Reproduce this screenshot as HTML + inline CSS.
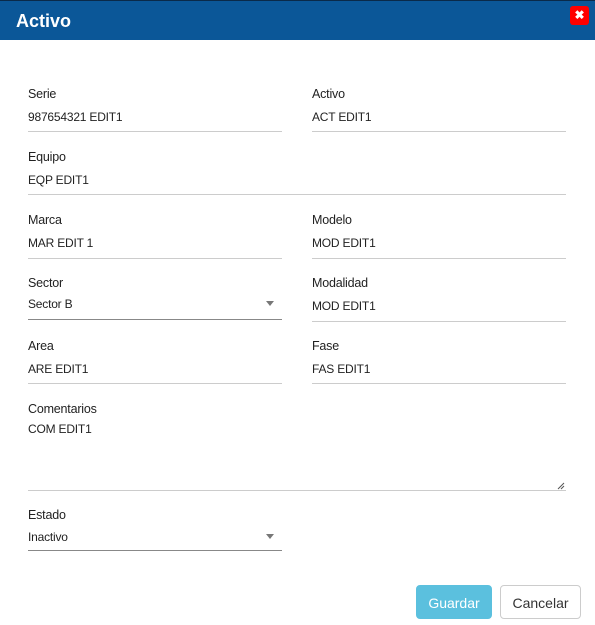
<html><head><style>
body{margin:0;width:595px;height:625px;background:#fff;font-family:"Liberation Sans",sans-serif;position:relative;overflow:hidden;color:#222}
.hd{position:absolute;left:0;top:0;width:595px;height:40px;background:#0b5798;border-top:1px solid #0a2a4a;box-sizing:border-box}
.hd span{position:absolute;left:16px;top:10px;color:#fff;font-weight:bold;font-size:18px}
.x{position:absolute;left:570px;top:6px;width:19px;height:19px;background:#f00;border-radius:3px;color:#fff;font-size:12px;font-weight:bold;text-align:center;line-height:19px}
.l,.v{position:absolute;font-size:12.5px;white-space:nowrap;letter-spacing:-0.2px}
.l{color:#222}.v{color:#222;font-size:12px}
.ln{position:absolute;height:1px;background:#ccc}
.sel{height:1px;background:#888}
.ar{position:absolute;width:0;height:0;border-left:4px solid transparent;border-right:4px solid transparent;border-top:5px solid #777}
.b{position:absolute;top:585px;height:34px;border-radius:4px;font-size:14px;text-align:center;line-height:34px;box-sizing:border-box}
</style></head><body>
<div class="hd"><span>Activo</span></div><div class="x">✖</div>

<div class="l" style="left:28px;top:87px">Serie</div><div class="v" style="left:28px;top:110px">987654321 EDIT1</div><div class="ln" style="left:28px;top:131px;width:254px"></div>
<div class="l" style="left:312px;top:87px">Activo</div><div class="v" style="left:312px;top:110px">ACT EDIT1</div><div class="ln" style="left:312px;top:131px;width:254px"></div>

<div class="l" style="left:28px;top:150px">Equipo</div><div class="v" style="left:28px;top:173px">EQP EDIT1</div><div class="ln" style="left:28px;top:194px;width:538px"></div>

<div class="l" style="left:28px;top:213px">Marca</div><div class="v" style="left:28px;top:236px">MAR EDIT 1</div><div class="ln" style="left:28px;top:258px;width:254px"></div>
<div class="l" style="left:312px;top:213px">Modelo</div><div class="v" style="left:312px;top:236px">MOD EDIT1</div><div class="ln" style="left:312px;top:258px;width:254px"></div>

<div class="l" style="left:28px;top:276px">Sector</div><div class="v" style="left:28px;top:297px">Sector B</div><div class="ln sel" style="left:28px;top:319px;width:254px"></div><div class="ar" style="left:266px;top:301px"></div>
<div class="l" style="left:312px;top:276px">Modalidad</div><div class="v" style="left:312px;top:299px">MOD EDIT1</div><div class="ln" style="left:312px;top:321px;width:254px"></div>

<div class="l" style="left:28px;top:339px">Area</div><div class="v" style="left:28px;top:362px">ARE EDIT1</div><div class="ln" style="left:28px;top:383px;width:254px"></div>
<div class="l" style="left:312px;top:339px">Fase</div><div class="v" style="left:312px;top:362px">FAS EDIT1</div><div class="ln" style="left:312px;top:383px;width:254px"></div>

<div class="l" style="left:28px;top:402px">Comentarios</div><div class="v" style="left:28px;top:422px">COM EDIT1</div><div class="ln" style="left:28px;top:490px;width:538px"></div>
<svg style="position:absolute;left:557px;top:482px" width="8" height="8"><path d="M1 7L7 1M4 7L7 4" stroke="#555" stroke-width="1"/></svg>

<div class="l" style="left:28px;top:508px">Estado</div><div class="v" style="left:28px;top:530px">Inactivo</div><div class="ln sel" style="left:28px;top:550px;width:254px"></div><div class="ar" style="left:266px;top:534px"></div>

<div class="b" style="left:416px;width:76px;background:#5bc0de;color:#fff;border:1px solid #5bc0de">Guardar</div>
<div class="b" style="left:500px;width:81px;background:#fff;color:#333;border:1px solid #ccc">Cancelar</div>
</body></html>
